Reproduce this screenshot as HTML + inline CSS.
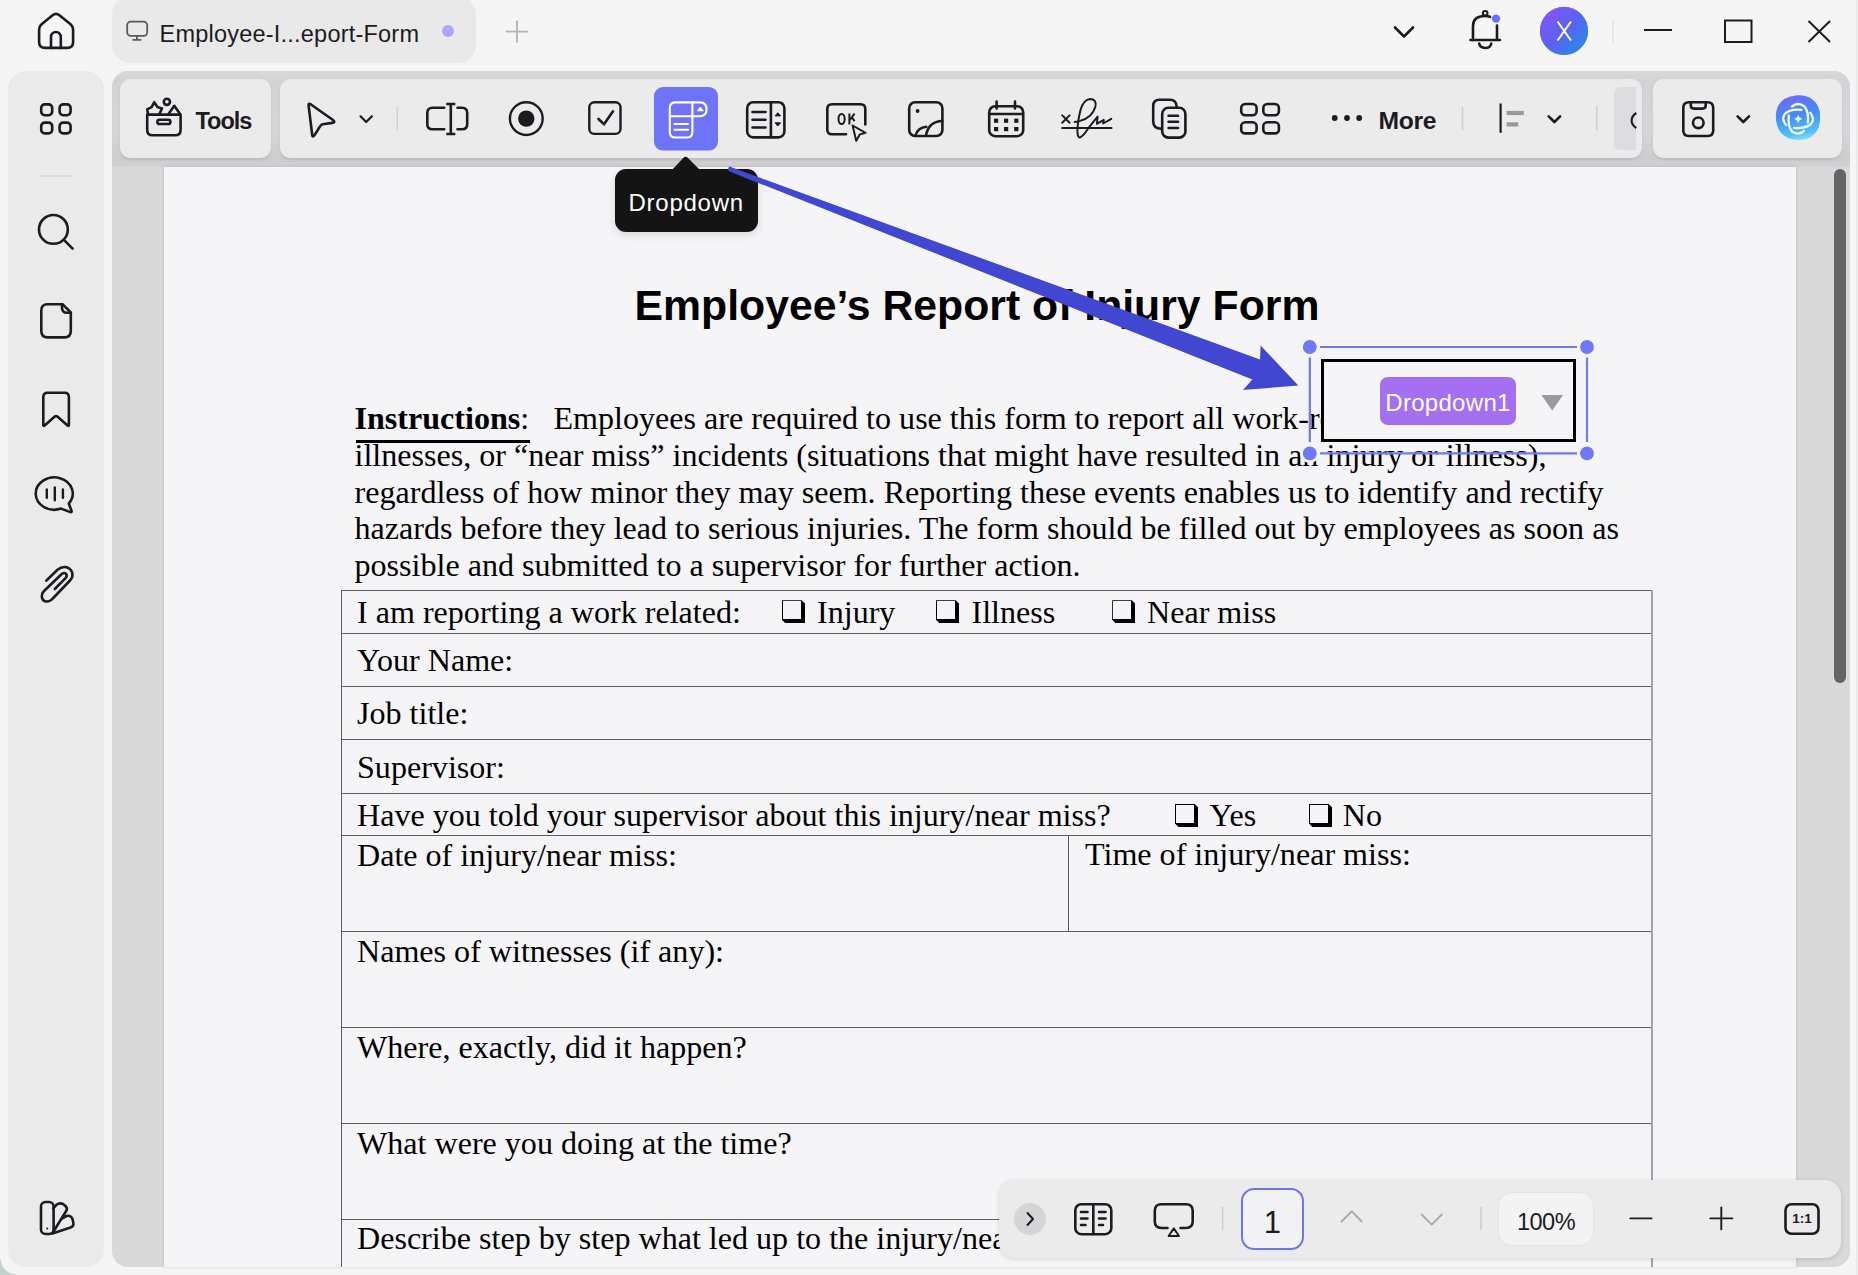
<!DOCTYPE html>
<html><head><meta charset="utf-8">
<style>
*{margin:0;padding:0;box-sizing:border-box}
html,body{width:1858px;height:1275px;overflow:hidden;background:#f5f5f5;font-family:"Liberation Sans",sans-serif;color:#1c1c1e}
.a{position:absolute}
svg.a{overflow:visible}
.ic{fill:none;stroke:#1c1c1e;stroke-width:2.6;stroke-linecap:round;stroke-linejoin:round}
.serif{font-family:"Liberation Serif",serif;color:#000;white-space:pre;line-height:1}
.hl{position:absolute;left:341px;width:1311px;height:1.3px;background:#5e5e5e}
.cb{position:absolute;width:20px;height:20px;border:2px solid #000;box-shadow:2px 2px 0 #000,3px 3px 0 #000}
</style></head>
<body>
<!-- top bar -->
<div class="a" style="left:112px;top:-4px;width:364px;height:67px;background:#e9e9e9;border-radius:18px"></div>
<div class="a" style="left:159.5px;top:20.5px;font-size:23.5px;letter-spacing:0.22px;white-space:pre;color:#1c1c1e">Employee-I...eport-Form</div>
<div class="a" style="left:442px;top:25px;width:12px;height:12px;border-radius:50%;background:#a9a9f6"></div>

<div class="a" style="left:1540px;top:7px;width:48px;height:48px;border-radius:50%;background:linear-gradient(135deg,#8a5cf5 0%,#5a63f0 45%,#2a8ee8 100%)"></div>
<div class="a" style="left:1540px;top:16px;width:48px;text-align:center;color:#fff;font-size:27px;line-height:30px">X</div>

<!-- sidebar -->
<div class="a" style="left:8px;top:71px;width:96px;height:1196px;background:#eaeaea;border-radius:18px"></div>
<div class="a" style="left:40px;top:175px;width:32px;height:2px;background:#dcdcdc"></div>

<!-- main area -->
<div class="a" style="left:112px;top:71px;width:1738px;height:1196px;background:#d9d9d9;border-radius:16px"></div>
<!-- toolbar groups -->
<div class="a" style="left:112px;top:71px;width:1738px;height:96px;border-radius:16px 16px 0 0;background:linear-gradient(to bottom,#d9d9db 0px,#d3d3d5 9px,#d6d6d8 60px,#cdcdcf 88px,#d2d2d4 96px)"></div>
<div class="a" style="left:120px;top:79px;width:151px;height:79px;background:#ebebec;border-radius:11px;box-shadow:0 2px 3px rgba(0,0,0,.08)"></div>
<div class="a" style="left:280px;top:79px;width:1362px;height:79px;background:#ebebec;border-radius:11px;box-shadow:0 2px 3px rgba(0,0,0,.08)"></div>
<div class="a" style="left:1653px;top:79px;width:189px;height:79px;background:#ebebec;border-radius:11px;box-shadow:0 2px 3px rgba(0,0,0,.08)"></div>

<!-- page -->
<div class="a" style="left:164px;top:167px;width:1632px;height:1100px;background:#f5f5f7;box-shadow:0 0 3px 1px rgba(0,0,0,.07)"></div>
<!-- scrollbar -->
<div class="a" style="left:1834px;top:169px;width:12px;height:514px;background:#646466;border-radius:6px"></div>


<svg class="a" style="left:0;top:0" width="1858" height="1275" viewBox="0 0 1858 1275">
<g class="ic" stroke-width="2.2">
 <!-- home -->
 <path d="M39.1 29.5 Q39.1 26.3 41.6 24.2 L52.6 15.3 Q56 12.6 59.4 15.3 L70.6 24.2 Q73.1 26.3 73.1 29.5 L73.1 42 Q73.1 47.9 67.2 47.9 L45 47.9 Q39.1 47.9 39.1 42 Z"/>
 <path d="M51 47.9 V36.9 A4.9 4.9 0 0 1 60.8 36.9 V47.9"/>
</g>
<g fill="none" stroke="#5a5a5a" stroke-width="1.8" stroke-linecap="round">
 <rect x="127.2" y="21.6" width="20" height="14.2" rx="3.6"/>
 <path d="M136.9 36 V39.6 M133.2 39.8 H140.6"/>
</g>
<path d="M517 20.5 V42.8 M505.8 31.6 H528.2" stroke="#b3b3b3" stroke-width="1.8" fill="none"/>
<g class="ic" stroke-width="2.2">
 <path d="M1395 27.5 L1404 36.5 L1413 27.5"/>
 <!-- bell -->
 <path d="M1470.5 40 H1500"/>
 <path d="M1473 40 V26 Q1473 16 1485.2 16 Q1488 16 1490 16.8"/>
 <path d="M1497 25.5 V40"/>
 <path d="M1479.2 43.6 Q1480 48 1485.2 48 Q1490.5 48 1491.2 43.6"/>
 <circle cx="1485.2" cy="13.2" r="2.3" stroke-width="2"/>
</g>
<circle cx="1496" cy="18.6" r="4.2" fill="#6c70f4"/>
<defs>
 <linearGradient id="avg" x1="0" y1="0" x2="1" y2="1">
  <stop offset="0" stop-color="#9050f7"/><stop offset="0.5" stop-color="#5a62f2"/><stop offset="1" stop-color="#1896e2"/>
 </linearGradient>
 <linearGradient id="aig" x1="0.4" y1="0" x2="0.6" y2="1">
  <stop offset="0" stop-color="#6d6af8"/><stop offset="0.45" stop-color="#468df2"/><stop offset="0.85" stop-color="#4cc2f6"/><stop offset="1" stop-color="#8ddcf6"/>
 </linearGradient>
</defs>
<circle cx="1564" cy="30.8" r="24" fill="url(#avg)"/>
<path d="M1557.5 21.5 L1571 40.5 M1571 21.5 L1557.5 40.5" stroke="#fff" stroke-width="2" fill="none"/>
<path d="M1613 20 V43.5" stroke="#e2e2e2" stroke-width="1.5"/>
<g fill="none" stroke="#1c1c1e" stroke-width="2">
 <path d="M1644 30 H1672"/>
 <rect x="1725" y="20.5" width="26.5" height="21.5"/>
 <path d="M1808.5 21 L1830 42 M1830 21 L1808.5 42"/>
</g>

<!-- sidebar -->
<g class="ic" stroke-width="2.15">
 <rect x="41.2" y="104.4" width="11" height="10.8" rx="3.6"/>
 <rect x="59.6" y="104.4" width="11" height="10.8" rx="3.6"/>
 <rect x="41.2" y="122.6" width="11" height="10.8" rx="3.6"/>
 <rect x="59.6" y="122.6" width="11" height="10.8" rx="3.6"/>
 <circle cx="53.4" cy="229.4" r="14.4"/>
 <path d="M64.4 240.4 L72.6 248.6"/>
 <path d="M47.5 304.2 H62.5 L70.8 312.5 V331 Q70.8 337.4 64.4 337.4 H47.6 Q41.3 337.4 41.3 331 V310.5 Q41.3 304.2 47.5 304.2 Z"/>
 <path d="M62 304.6 V307.5 Q62 312.8 67 312.8 H70.4"/>
 <path d="M43.3 425 V397 Q43.3 392.7 47.6 392.7 H64.6 Q68.9 392.7 68.9 397 V425 Q68.9 426.5 67.6 425.5 L57.3 416.5 Q56 415.6 54.8 416.5 L44.6 425.5 Q43.3 426.5 43.3 425 Z"/>
 <path d="M61 508.6 A18.5 16.2 0 1 1 68.8 503.5 L71.5 510.8 Q72 512.5 70.3 512.1 Z"/>
 <path d="M46.8 489.5 V497.8 M54.8 487.5 V500.2 M62.9 489.5 V497.8" stroke-width="2.4"/>
 <path d="M46.2 580.7 L57.5 569.8 Q61 566.8 65 567 Q70 567.5 72 572 Q73.6 576.8 70 580.5 L52.8 598.5 Q50 601.8 46 601.5 Q42.3 600.8 41.8 596.5 Q41.5 593.5 44 591 L62 573.8 Q64.2 572.2 66 573.8 Q67.5 575.6 65.8 577.8 L54.8 589"/>
 <!-- swatch -->
 <rect x="41" y="1202" width="12.6" height="32" rx="4.5"/>
 <path d="M53.2 1208.5 L56.5 1204.8 Q59.5 1202.3 63 1204 L65.5 1206 Q68 1208.5 66.2 1211 L53.2 1232"/>
 <path d="M62.3 1218.3 L66.5 1216 Q70.5 1214.8 72.3 1218.5 L73.3 1222.5 Q74 1226.5 70.5 1227.6 L52.5 1233.6"/>
</g>
<circle cx="47.2" cy="1228.5" r="1" fill="#1c1c1e"/>
<path d="M40 176 H72" stroke="#dddddd" stroke-width="1.6"/>
</svg>


<svg class="a" style="left:0;top:0" width="1858" height="1275" viewBox="0 0 1858 1275">
<!-- Tools group -->
<g class="ic" stroke-width="2.0">
 <path d="M147.2 114.6 H180.6 V130 Q180.6 135.3 175.3 135.3 H152.5 Q147.2 135.3 147.2 130 Z"/>
 <rect x="157.4" y="119.8" width="13" height="4.2" rx="2.1"/>
 <path d="M148 113.8 L147.2 109.3 L151.6 107.2 L154.3 102.2 L157.3 106.9 L162 108.4 L159.6 113.8"/>
 <circle cx="166.9" cy="101.8" r="3.1"/>
 <path d="M168.7 113.8 L174.3 105.8 L179.8 113.8"/>
</g>

<g class="ic" stroke-width="2.15">
 <!-- cursor -->
 <path d="M308.6 105.5 Q308.3 102.8 310.6 104.2 L333 120 Q336 122.4 332.3 122.9 L322.8 124.2 Q321.2 124.5 320.4 125.9 L314.3 135.5 Q312.6 137.6 312.2 135 Z"/>
 <path d="M360.5 116.3 L366.2 122 L371.9 116.3" stroke-width="2.2"/>
 <!-- text field -->
 <path d="M444.2 107.8 H432.5 Q427.3 107.8 427.3 113 V124.2 Q427.3 129.3 432.5 129.3 H444.2"/>
 <path d="M457.5 107.8 H462 Q467.2 107.8 467.2 113 V124.2 Q467.2 129.3 462 129.3 H457.5"/>
 <path d="M450.8 104 V134 M446.3 104 H455.3 M446.3 134 H455.3" stroke-linecap="butt"/>
 <!-- radio -->
 <circle cx="526.3" cy="118.6" r="16.4" stroke-width="2.4"/>
 <!-- checkbox -->
 <rect x="589.3" y="102.3" width="31.2" height="31.6" rx="5" stroke-width="2.4"/>
 <path d="M598.5 119 L604 124.3 L613 111.3"/>
</g>
<circle cx="526.3" cy="118.6" r="8.2" fill="#1c1c1e"/>
<path d="M397.3 107 V130" stroke="#d2d2d2" stroke-width="1.6"/>
<!-- active dropdown -->
<rect x="654" y="87" width="64" height="63.6" rx="9" fill="#6f74f6"/>
<g fill="none" stroke="#fff" stroke-width="2.1" stroke-linejoin="round" stroke-linecap="round">
 <path d="M692.4 102.4 H699.6 Q706.6 102.4 706.6 109.3 Q706.6 116.2 699.6 116.2 H692.4"/>
 <path d="M675.4 102.4 Q669.8 102.4 669.8 108 V131.9 Q669.8 137.5 675.4 137.5 H686.8 Q692.4 137.5 692.4 131.9 V102.4 Z"/>
 <path d="M669.8 116.2 H692.4 M674.5 124 H688 M674.5 129.7 H688"/>
</g>
<path d="M697.3 110.8 L700.3 107 L703.3 110.8 Z" fill="#fff" stroke="#fff" stroke-width="0.8" stroke-linejoin="round"/>
<g class="ic" stroke-width="2.1">
 <!-- list box -->
 <rect x="747.2" y="102.2" width="37.2" height="35.2" rx="6"/>
 <path d="M770.9 102.5 V137.2"/>
 <path d="M752.5 112 H765.5 M752.5 119.8 H765.5 M752.5 127.5 H765.5"/>
 <!-- OK -->
 <path d="M846 134.3 H832 Q827.3 134.3 827.3 129.5 V109 Q827.3 104.3 832 104.3 H860.5 Q865.3 104.3 865.3 109 V124.5"/>
 <path d="M852.6 125.5 L865.6 132.8 L859.8 134.4 L856.2 140.8 Z" stroke-width="2"/>
 <!-- image -->
 <rect x="909.2" y="102.2" width="33.2" height="33.8" rx="6"/>
 <path d="M915.5 135.5 Q918 127.5 926.2 126.8 M926 135.5 Q928.5 121.5 942.2 121"/>
 <!-- calendar -->
 <rect x="989.2" y="106.2" width="34" height="30" rx="6"/>
 <path d="M989.5 114 H1023 M996.6 101.5 V108.5 M1015 101.5 V108.5"/>
</g>
<path d="M777.8 112.7 L780.5 115.9 H775.1 Z M775.1 122.8 H780.5 L777.8 126 Z" fill="#1c1c1e" stroke="#1c1c1e" stroke-width="1" stroke-linejoin="round"/>
<circle cx="917.6" cy="111" r="1.9" fill="#1c1c1e"/>
<g fill="none" stroke="#1c1c1e" stroke-width="2"><ellipse cx="841.6" cy="119" rx="3.1" ry="5.1"/><path d="M849.4 113.6 V124.6 M854.6 113.6 L849.8 120 M851.8 117.4 L854.6 121.2"/></g>
<g fill="#1c1c1e">
 <rect x="994" y="118.6" width="4.2" height="4.2"/><rect x="1004" y="118.6" width="4.2" height="4.2"/><rect x="1014.2" y="118.6" width="4.2" height="4.2"/>
 <rect x="994" y="127" width="4.2" height="4.2"/><rect x="1004" y="127" width="4.2" height="4.2"/><rect x="1014.2" y="127" width="4.2" height="4.2"/>
</g>
<g class="ic" stroke-width="2.2">
 <!-- signature -->
 <path d="M1062.2 115.4 L1069.6 122.8 M1069.6 115.4 L1062.2 122.8" stroke-width="2"/>
 <path d="M1062.3 128 H1111.5" stroke-width="2.2"/>
 <path d="M1074.6 121.9 L1080 120.9 Q1092.5 117.5 1095.4 106.5 Q1096.8 99 1090 98.9 Q1083.5 99.5 1080.5 110 Q1077.6 122 1077.4 131 Q1077.6 138.2 1080.2 137.3 Q1083 136.5 1088.3 128.2 L1097.6 116.6 L1096.9 123.8 L1103.8 119.9 L1103.1 123.5 L1111.3 118.9" stroke-width="2"/>
 <!-- copy -->
 <path d="M1161.5 128.8 Q1153.2 128.8 1153.2 121 V106 Q1153.2 99.8 1159.5 99.8 H1170 Q1176.2 99.8 1176.6 106.5"/>
 <rect x="1162.2" y="107.8" width="23.2" height="29.8" rx="6.2"/>
 <path d="M1168.6 115.8 H1178 M1168.6 121.8 H1178 M1168.6 128 H1178"/>
 <!-- grid 2x2 -->
 <rect x="1241.2" y="104" width="15.4" height="11.2" rx="4"/>
 <rect x="1263.3" y="104" width="15.6" height="11.2" rx="4"/>
 <rect x="1241.2" y="122.2" width="15.4" height="11.2" rx="4"/>
 <rect x="1263.3" y="122.2" width="15.6" height="11.2" rx="4"/>
</g>
<g fill="#1c1c1e"><circle cx="1334.7" cy="118" r="2.9"/><circle cx="1347" cy="118" r="2.9"/><circle cx="1359.2" cy="118" r="2.9"/></g>
<path d="M1462.5 107 V130 M1596.8 105.5 V130.5" stroke="#cfcfcf" stroke-width="1.6"/>
<path d="M1500.6 103.5 V132.8" stroke="#1c1c1e" stroke-width="2.2"/>
<rect x="1506.6" y="110.9" width="17.2" height="4.2" fill="#999"/>
<rect x="1506.6" y="122.3" width="11.6" height="4.2" fill="#999"/>
<path d="M1548.7 116.3 L1554.4 122 L1560.1 116.3 M1737.6 116.3 L1743.3 122 L1749 116.3" class="ic" stroke-width="2.2"/>
<!-- save -->
<g class="ic" stroke-width="2.1">
 <path d="M1689 102.3 H1707.5 Q1713.2 102.3 1713.2 108 V130.5 Q1713.2 136 1707.5 136 H1689 Q1683.3 136 1683.3 130.5 V108 Q1683.3 102.3 1689 102.3 Z"/>
 <path d="M1690.8 102.6 V105.5 Q1690.8 108.6 1694 108.6 H1702.5 Q1705.7 108.6 1705.7 105.5 V102.6"/>
 <circle cx="1698.3" cy="122.8" r="5.3"/>
</g>
<!-- AI -->
<path d="M1797.5 95.3 Q1816 95 1819.8 112 Q1822 132 1808 138.5 Q1799 141.5 1788 138 Q1776.5 133 1775.8 117 Q1776 97 1797.5 95.3 Z" fill="url(#aig)"/>
<g fill="none" stroke="#f2fbff" stroke-width="2.3" stroke-linecap="round">
 <path d="M1792 106.5 Q1798 101.5 1804.5 106.5 Q1809 112 1807.8 122.5"/>
 <path d="M1810.3 112.8 Q1815 119 1811 124 Q1805 129 1794 127.8"/>
 <path d="M1804 131 Q1798 136 1792 131.5 Q1787.5 126 1788.8 115.5"/>
 <path d="M1786 125 Q1781 119 1785 113.8 Q1790 108.5 1801.5 109.8"/>
</g>
<path d="M1798.2 114.6 Q1798.9 118.2 1802.4 118.9 Q1798.9 119.6 1798.2 123.2 Q1797.5 119.6 1794 118.9 Q1797.5 118.2 1798.2 114.6 Z" fill="#f2fbff"/>
</svg>
<div class="a" style="left:195.5px;top:110px;font-size:23.5px;letter-spacing:-1px;font-weight:bold;color:#1c1c1e;line-height:1">Tools</div>
<div class="a" style="left:1378.5px;top:109px;font-size:24.7px;letter-spacing:-0.35px;font-weight:bold;color:#1c1c1e;line-height:1">More</div>
<div class="a" style="left:1614.2px;top:87px;width:22.3px;height:62.8px;background:#dddddf;border-radius:6px 0 0 6px"></div>
<svg class="a" style="left:1625px;top:108px" width="17" height="25"><path d="M11.3 5 Q6.6 8 6.6 12.5 Q6.6 17 11.3 20" fill="none" stroke="#1c1c1e" stroke-width="2.1" stroke-linecap="butt"/></svg>

<!-- document content -->
<div id="doc">
<div class="a" style="left:634.5px;top:284.0px;font-size:42.75px;font-weight:bold;color:#000;white-space:pre;line-height:1">Employee’s Report of Injury Form</div>
<div class="a serif" style="left:354.5px;top:402.0px;font-size:32.1px;"><b>Instructions</b>:</div>
<div class="a" style="left:356px;top:440px;width:174px;height:2.6px;background:#000"></div>
<div class="a serif" style="left:553.5px;top:402.0px;font-size:32.1px;">Employees are required to use this form to report all work-related injuries,</div>
<div class="a serif" style="left:354.5px;top:438.7px;font-size:32.1px;">illnesses, or “near miss” incidents (situations that might have resulted in an injury or illness),</div>
<div class="a serif" style="left:354.5px;top:475.5px;font-size:32.1px;">regardless of how minor they may seem. Reporting these events enables us to identify and rectify</div>
<div class="a serif" style="left:354.5px;top:511.8px;font-size:32.1px;">hazards before they lead to serious injuries. The form should be filled out by employees as soon as</div>
<div class="a serif" style="left:354.5px;top:548.6px;font-size:32.1px;">possible and submitted to a supervisor for further action.</div>
<div class="hl" style="top:590px"></div>
<div class="hl" style="top:633px"></div>
<div class="hl" style="top:686px"></div>
<div class="hl" style="top:739px"></div>
<div class="hl" style="top:793px"></div>
<div class="hl" style="top:835px"></div>
<div class="hl" style="top:931px"></div>
<div class="hl" style="top:1027px"></div>
<div class="hl" style="top:1123px"></div>
<div class="hl" style="top:1219px"></div>
<div class="a" style="left:341px;top:590px;width:1.2px;height:677px;background:#5e5e5e"></div>
<div class="a" style="left:1651px;top:590px;width:2px;height:677px;background:#a3a3a3"></div>
<div class="a" style="left:1068px;top:836px;width:1.2px;height:96px;background:#5a5a5a"></div>
<div class="a serif" style="left:357px;top:595.6px;font-size:32.1px;">I am reporting a work related:</div>
<div class="a" style="left:782px;top:600.2px;width:23px;height:23px;border-style:solid;border-color:#000;border-width:1.9px 4.8px 4.5px 1.4px;clip-path:polygon(0 0,calc(100% - 3.4px) 0,100% 3.4px,100% 100%,3.4px 100%,0 calc(100% - 3.4px))"></div>
<div class="a serif" style="left:817px;top:595.6px;font-size:32.1px;">Injury</div>
<div class="a" style="left:936px;top:600.2px;width:23px;height:23px;border-style:solid;border-color:#000;border-width:1.9px 4.8px 4.5px 1.4px;clip-path:polygon(0 0,calc(100% - 3.4px) 0,100% 3.4px,100% 100%,3.4px 100%,0 calc(100% - 3.4px))"></div>
<div class="a serif" style="left:971.5px;top:595.6px;font-size:32.1px;">Illness</div>
<div class="a" style="left:1112.2px;top:600.2px;width:23px;height:23px;border-style:solid;border-color:#000;border-width:1.9px 4.8px 4.5px 1.4px;clip-path:polygon(0 0,calc(100% - 3.4px) 0,100% 3.4px,100% 100%,3.4px 100%,0 calc(100% - 3.4px))"></div>
<div class="a serif" style="left:1147px;top:595.6px;font-size:32.1px;">Near miss</div>
<div class="a serif" style="left:357px;top:644.0px;font-size:32.1px;">Your Name:</div>
<div class="a serif" style="left:357px;top:697.3px;font-size:32.1px;">Job title:</div>
<div class="a serif" style="left:357px;top:750.7px;font-size:32.1px;">Supervisor:</div>
<div class="a serif" style="left:357px;top:799.3px;font-size:32.1px;">Have you told your supervisor about this injury/near miss?</div>
<div class="a" style="left:1175px;top:803.9px;width:23px;height:23px;border-style:solid;border-color:#000;border-width:1.9px 4.8px 4.5px 1.4px;clip-path:polygon(0 0,calc(100% - 3.4px) 0,100% 3.4px,100% 100%,3.4px 100%,0 calc(100% - 3.4px))"></div>
<div class="a serif" style="left:1209.6px;top:799.3px;font-size:32.1px;">Yes</div>
<div class="a" style="left:1309px;top:803.9px;width:23px;height:23px;border-style:solid;border-color:#000;border-width:1.9px 4.8px 4.5px 1.4px;clip-path:polygon(0 0,calc(100% - 3.4px) 0,100% 3.4px,100% 100%,3.4px 100%,0 calc(100% - 3.4px))"></div>
<div class="a serif" style="left:1342.8px;top:799.3px;font-size:32.1px;">No</div>
<div class="a serif" style="left:357px;top:839.1px;font-size:32.1px;">Date of injury/near miss:</div>
<div class="a serif" style="left:1085px;top:838.4px;font-size:32.1px;">Time of injury/near miss:</div>
<div class="a serif" style="left:357px;top:934.6px;font-size:32.1px;">Names of witnesses (if any):</div>
<div class="a serif" style="left:357px;top:1031.2px;font-size:32.1px;">Where, exactly, did it happen?</div>
<div class="a serif" style="left:357px;top:1126.8px;font-size:32.1px;">What were you doing at the time?</div>
<div class="a serif" style="left:357px;top:1222.3px;font-size:32.1px;">Describe step by step what led up to the injury/near miss. (continue on the back if necessary):</div>
</div>


<!-- tooltip -->
<div class="a" style="left:614.6px;top:169px;width:143px;height:63.4px;background:#141414;border-radius:11px;box-shadow:0 3px 8px rgba(0,0,0,.12)"></div>
<svg class="a" style="left:670px;top:154px" width="32" height="17"><path d="M2 16 L13.2 4 Q15.6 1.6 18 4 L30 16 Z" fill="#141414"/></svg>
<div class="a" style="left:628.5px;top:191px;font-size:24px;letter-spacing:0.75px;color:#fff;line-height:1;white-space:pre">Dropdown</div>

<!-- dropdown field -->
<div class="a" style="left:1321.3px;top:358.6px;width:255px;height:83.6px;background:#f5f5f7;border:3px solid #000"></div>
<div class="a" style="left:1380.4px;top:377px;width:135.2px;height:47.5px;background:#a46ff0;border-radius:8px"></div>
<div class="a" style="left:1380.4px;top:391px;width:135.2px;text-align:center;font-size:24px;letter-spacing:0.3px;color:#fff;line-height:1;white-space:pre">Dropdown1</div>
<svg class="a" style="left:0;top:0" width="1858" height="1275" viewBox="0 0 1858 1275">
 <path d="M1541.5 395 H1563 L1552.2 410.5 Z" fill="#9a9a9a"/>
 <g stroke="#6f78f5" stroke-width="2.2" fill="none">
  <path d="M1320 347 H1577 M1320 453.4 H1577 M1309.8 357.5 V442 M1587 357.5 V442"/>
 </g>
 <g fill="#f5f5f7">
  <circle cx="1309.8" cy="347" r="9.8"/><circle cx="1587" cy="347" r="9.8"/>
  <circle cx="1309.8" cy="453.4" r="9.8"/><circle cx="1587" cy="453.4" r="9.8"/>
 </g>
 <g fill="#6f78f5">
  <circle cx="1309.8" cy="347" r="6.9"/><circle cx="1587" cy="347" r="6.9"/>
  <circle cx="1309.8" cy="453.4" r="6.9"/><circle cx="1587" cy="453.4" r="6.9"/>
 </g>
 <!-- arrow -->
 <path d="M729.5 166.6 L1260 359.6 L1260.6 345.4 L1298.3 385.6 L1243 389.9 L1252.4 379.5 L729 171.2 Q727 169 729.5 166.6 Z" fill="#4147d1"/>
</svg>

<!-- bottom toolbar -->
<div class="a" style="left:999.3px;top:1179.6px;width:842px;height:78.4px;background:#ebebec;border-radius:16px;box-shadow:0 1px 5px rgba(0,0,0,.14)"></div>
<svg class="a" style="left:0;top:0" width="1858" height="1275" viewBox="0 0 1858 1275">
 <circle cx="1030" cy="1219" r="16" fill="#d5d5d7"/>
 <path d="M1027.5 1213 L1033 1219 L1027.5 1225" fill="none" stroke="#1c1c1e" stroke-width="2" stroke-linecap="round" stroke-linejoin="round"/>
 <g class="ic" stroke-width="1.9">
  <rect x="1075.3" y="1204.2" width="36" height="30" rx="6"/>
  <path d="M1093.3 1204.5 V1234 M1081 1212 H1087.5 M1081 1218.5 H1087.5 M1081 1225 H1085.5 M1099 1212 H1105.5 M1099 1218.5 H1105.5 M1099 1225 H1103"/>
  <path d="M1167.5 1228 H1161.5 Q1154.8 1228 1154.8 1221.3 V1210.8 Q1154.8 1204.2 1161.5 1204.2 H1186 Q1192.7 1204.2 1192.7 1210.8 V1221.3 Q1192.7 1228 1186 1228 H1180.5"/>
  <path d="M1173.8 1228.4 L1179 1236 H1168.6 Z" stroke-width="1.9"/>
 </g>
 <path d="M1222.7 1207 V1230 M1481 1207 V1230" stroke="#cfcfcf" stroke-width="1.6"/>
 <g fill="none" stroke="#a8a8a8" stroke-width="1.8" stroke-linecap="round" stroke-linejoin="round">
  <path d="M1341.6 1221.5 L1351.7 1211.3 L1361.8 1221.5"/>
  <path d="M1421.6 1214.5 L1431.7 1224.7 L1441.8 1214.5"/>
 </g>
 <g class="ic" stroke-width="2.2">
  <path d="M1630.3 1218.4 H1651.5" stroke-width="1.9"/>
  <path d="M1710.3 1218.4 H1732.3 M1721.3 1207.4 V1229.4" stroke-width="1.9"/>
  <rect x="1785.5" y="1204.2" width="33" height="29.6" rx="6"/>
 </g>
</svg>
<div class="a" style="left:1241px;top:1188px;width:62.5px;height:62px;border:2px solid #6d74f2;border-radius:13px;background:#f2f2f4"></div>
<div class="a" style="left:1241px;top:1206.5px;width:62.5px;text-align:center;font-size:31px;color:#1c1c1e;line-height:1">1</div>
<div class="a" style="left:1499px;top:1192.7px;width:94px;height:52.8px;border-radius:13px;background:#f3f3f4;box-shadow:0 0 0 1px #e4e4e6"></div>
<div class="a" style="left:1499px;top:1210.8px;width:94px;text-align:center;font-size:23.5px;letter-spacing:-0.5px;color:#1c1c1e;line-height:1">100%</div>
<div class="a" style="left:1785px;top:1211.5px;width:34px;text-align:center;font-size:13.5px;font-weight:bold;color:#1c1c1e;line-height:1">1:1</div>

<div class="a" style="left:0;top:1259px;width:16px;height:16px;background:radial-gradient(circle at 16px 0, rgba(0,0,0,0) 14.5px, #c3d0cc 16px)"></div>
<div class="a" style="left:1856px;top:0;width:1px;height:1275px;background:#e4e4e4"></div>
</body></html>
